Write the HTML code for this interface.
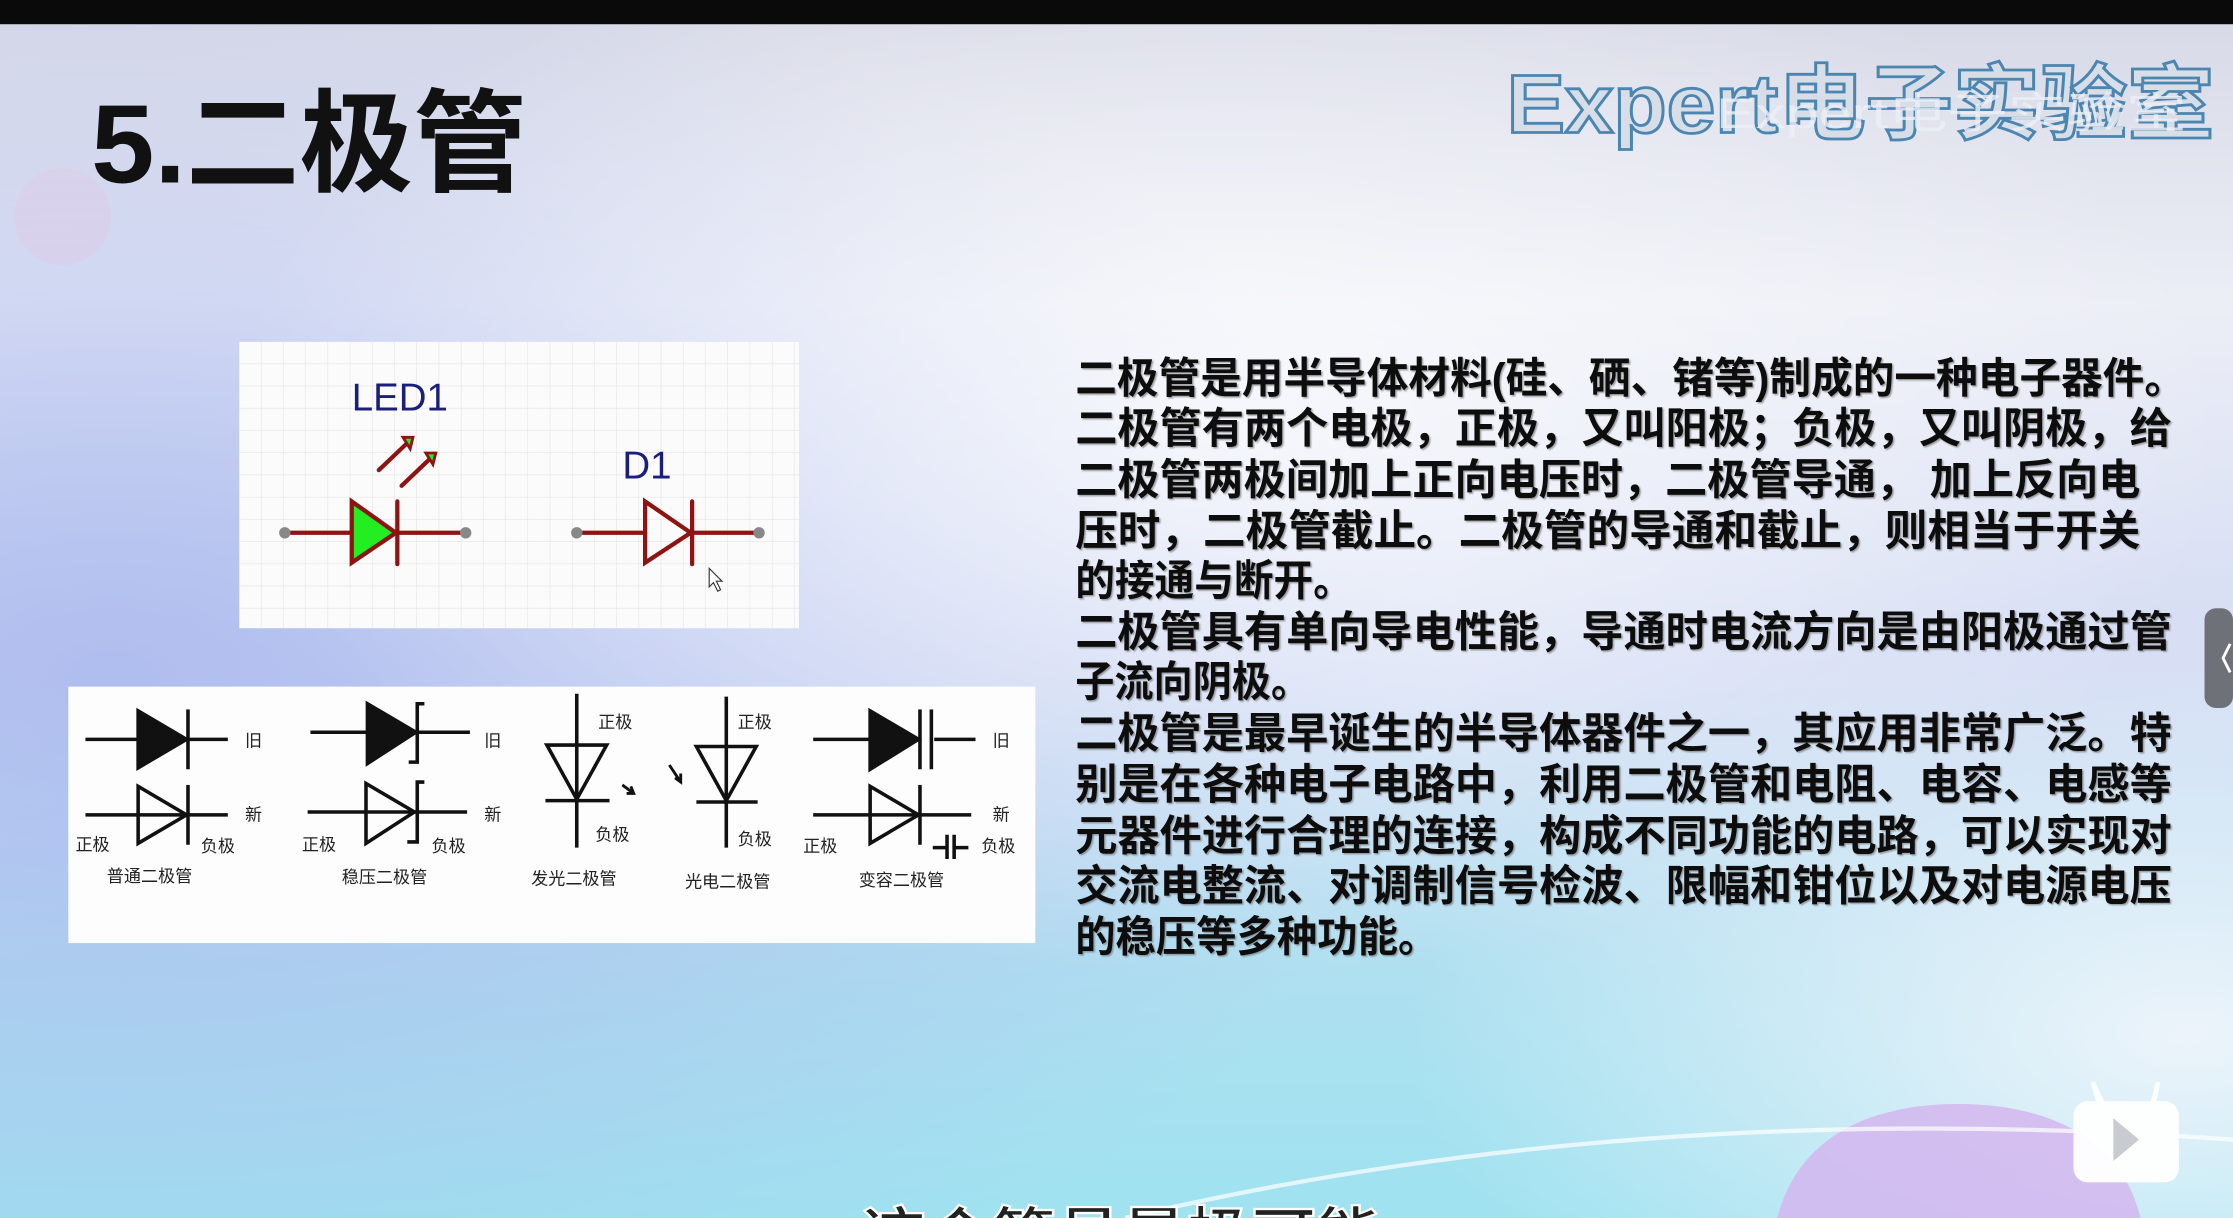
<!DOCTYPE html>
<html><head><meta charset="utf-8"><style>
html,body{margin:0;padding:0;width:2233px;height:1218px;overflow:hidden;background:#000}
svg{display:block}
.cn{font-family:"Liberation Sans","Noto Sans CJK SC","WenQuanYi Zen Hei",sans-serif}
</style></head><body>
<svg width="2233" height="1218" viewBox="0 0 1568 855" preserveAspectRatio="none" xmlns="http://www.w3.org/2000/svg" overflow="hidden">
<defs>
<linearGradient id="bg" x1="0" y1="0" x2="0" y2="1">
<stop offset="0" stop-color="#d6d8e6"/>
<stop offset="0.25" stop-color="#eceef6"/>
<stop offset="0.55" stop-color="#d4dcf4"/>
<stop offset="0.8" stop-color="#aee0f0"/>
<stop offset="1" stop-color="#9fe2f0"/>
</linearGradient>
<radialGradient id="lav" cx="0.05" cy="0.55" r="0.6">
<stop offset="0" stop-color="#a9b8ee" stop-opacity="0.85"/>
<stop offset="1" stop-color="#a9b8ee" stop-opacity="0"/>
</radialGradient>
<radialGradient id="wh" cx="0.55" cy="0.35" r="0.45">
<stop offset="0" stop-color="#ffffff" stop-opacity="0.7"/>
<stop offset="1" stop-color="#ffffff" stop-opacity="0"/>
</radialGradient>
<radialGradient id="rt" cx="0.98" cy="0.85" r="0.35">
<stop offset="0" stop-color="#f4f6fc" stop-opacity="0.9"/>
<stop offset="1" stop-color="#f4f6fc" stop-opacity="0"/>
</radialGradient>
<pattern id="grid" width="15.6" height="15.6" patternUnits="userSpaceOnUse" x="168" y="240">
<path d="M15.6 0V15.6M0 15.6H15.6" stroke="#e3e3e6" stroke-width="0.8" fill="none"/>
</pattern>
<filter id="sh"><feDropShadow dx="1" dy="1" stdDeviation="0.6" flood-color="#666" flood-opacity="0.6"/></filter>
</defs>
<rect width="1568" height="855" fill="url(#bg)"/>
<rect width="1568" height="855" fill="url(#lav)"/>
<rect width="1568" height="855" fill="url(#wh)"/>
<rect width="1568" height="855" fill="url(#rt)"/>
<circle cx="44" cy="152" r="34" fill="#e0c8e6" opacity="0.4"/>
<path d="M1248 855 C1262 800 1310 775 1375 775 C1440 775 1490 800 1503 855 Z" fill="#d4b6ee" opacity="0.85"/>
<path d="M790 855 Q1150 770 1568 800" stroke="#fff" stroke-width="3" fill="none" opacity="0.7"/>
<rect x="0" y="0" width="1568" height="17" fill="#0a0a0a"/>

<text x="64" y="128" class="cn" font-size="78" font-weight="bold" fill="#111" textLength="306" lengthAdjust="spacingAndGlyphs">5.二极管</text>

<text x="1058" y="93" class="cn" font-size="58" font-weight="bold" fill="#d8dee8" stroke="#4a86b0" stroke-width="2" textLength="497" lengthAdjust="spacingAndGlyphs">Expert电子实验室</text>
<text x="1205" y="90" class="cn" font-size="30" fill="#eef0f6" opacity="0.8" textLength="330" lengthAdjust="spacingAndGlyphs">Expert电子实验室</text>

<rect x="168" y="240" width="393" height="201" fill="#fbfbfc"/>
<rect x="168" y="240" width="393" height="201" fill="url(#grid)"/>
<text x="247" y="288" font-family="Liberation Sans,sans-serif" font-size="27" fill="#1b1f7a">LED1</text>
<text x="437" y="336" font-family="Liberation Sans,sans-serif" font-size="27" fill="#1b1f7a">D1</text>
<g stroke="#8e1414" stroke-width="3" fill="none" stroke-linecap="round">
<line x1="200" y1="374" x2="246" y2="374"/><line x1="279" y1="374" x2="327" y2="374"/>
<polygon points="247,352 247,395 278,374" fill="#22ee22"/>
<line x1="279" y1="352" x2="279" y2="396"/>
<line x1="266" y1="330" x2="287" y2="310"/><line x1="282" y1="341" x2="303" y2="321"/>
<line x1="405" y1="374" x2="453" y2="374"/><line x1="486" y1="374" x2="533" y2="374"/>
<polygon points="453,352 453,395 485,374" fill="none"/>
<line x1="486" y1="352" x2="486" y2="396"/>
</g>
<polygon points="283,307 290,307 288,315" fill="#22ee22" stroke="#8e1414" stroke-width="2"/>
<polygon points="299,318 306,318 304,326" fill="#22ee22" stroke="#8e1414" stroke-width="2"/>
<g fill="#888"><circle cx="200" cy="374" r="4"/><circle cx="327" cy="374" r="4"/><circle cx="405" cy="374" r="4"/><circle cx="533" cy="374" r="4"/></g>
<path d="M498 399 L498 412 L501 409 L504 415 L506 414 L503 408 L507 408 Z" fill="#fff" stroke="#333" stroke-width="0.8"/>

<rect x="48" y="482" width="679" height="180" fill="#fdfdfd"/>
<g stroke="#111" stroke-width="2.5" fill="none">
<line x1="60" y1="519" x2="160" y2="519"/><polygon points="97,499 97,539 131,519" fill="#111"/><line x1="132" y1="498" x2="132" y2="540"/>
<line x1="60" y1="572" x2="160" y2="572"/><polygon points="97,552 97,592 131,572"/><line x1="132" y1="551" x2="132" y2="593"/>
<line x1="218" y1="514" x2="330" y2="514"/><polygon points="258,494 258,536 292,514" fill="#111"/><path d="M298 494 H293 V535 H287"/>
<line x1="216" y1="570" x2="328" y2="570"/><polygon points="257,550 257,592 291,570"/><path d="M298 549 H293 V591 H286"/>
<line x1="405" y1="487" x2="405" y2="595"/><polygon points="384,523 426,523 405,561"/><line x1="383" y1="562" x2="428" y2="562"/>
<line x1="510" y1="489" x2="510" y2="595"/><polygon points="489,524 531,524 510,562"/><line x1="489" y1="563" x2="532" y2="563"/>
<line x1="571" y1="519" x2="645" y2="519"/><line x1="656" y1="519" x2="685" y2="519"/><polygon points="611,499 611,540 645,519" fill="#111"/><line x1="646" y1="498" x2="646" y2="540"/><line x1="654" y1="498" x2="654" y2="540"/>
<line x1="571" y1="572" x2="682" y2="572"/><polygon points="611,552 611,592 645,572"/><line x1="646" y1="551" x2="646" y2="593"/>
<path d="M655 595 H665 M665 586 V603 M670 586 V603 M670 595 H680"/>
</g>
<path d="M437 551 l8 6 M443 552 l2 5 l-5 0" stroke="#111" stroke-width="2" fill="none"/>
<path d="M470 537 l8 12 M478 543 l0 6 l-4 -3" stroke="#111" stroke-width="2" fill="none"/>
<g class="cn" font-size="12" fill="#222">
<text x="172" y="524">旧</text><text x="172" y="576">新</text>
<text x="53" y="597">正极</text><text x="141" y="598">负极</text>
<text x="75" y="619">普通二极管</text>
<text x="340" y="524">旧</text><text x="340" y="576">新</text>
<text x="212" y="597">正极</text><text x="303" y="598">负极</text>
<text x="240" y="620">稳压二极管</text>
<text x="420" y="511">正极</text><text x="418" y="590">负极</text>
<text x="373" y="621">发光二极管</text>
<text x="518" y="511">正极</text><text x="518" y="593">负极</text>
<text x="481" y="623">光电二极管</text>
<text x="697" y="524">旧</text><text x="697" y="576">新</text>
<text x="564" y="598">正极</text><text x="689" y="598">负极</text>
<text x="603" y="622">变容二极管</text>
</g>

<g class="cn" font-size="30" font-weight="bold" fill="#111" filter="url(#sh)">
<text x="755" y="276" textLength="780" lengthAdjust="spacingAndGlyphs">二极管是用半导体材料(硅、硒、锗等)制成的一种电子器件。</text>
<text x="755" y="311" textLength="770" lengthAdjust="spacingAndGlyphs">二极管有两个电极，正极，又叫阳极；负极，又叫阴极，给</text>
<text x="755" y="347" textLength="748" lengthAdjust="spacingAndGlyphs">二极管两极间加上正向电压时，二极管导通， 加上反向电</text>
<text x="755" y="383" textLength="748" lengthAdjust="spacingAndGlyphs">压时，二极管截止。二极管的导通和截止，则相当于开关</text>
<text x="755" y="418" textLength="195" lengthAdjust="spacingAndGlyphs">的接通与断开。</text>
<text x="755" y="454" textLength="770" lengthAdjust="spacingAndGlyphs">二极管具有单向导电性能，导通时电流方向是由阳极通过管</text>
<text x="755" y="489" textLength="165" lengthAdjust="spacingAndGlyphs">子流向阴极。</text>
<text x="755" y="525" textLength="770" lengthAdjust="spacingAndGlyphs">二极管是最早诞生的半导体器件之一，其应用非常广泛。特</text>
<text x="755" y="561" textLength="770" lengthAdjust="spacingAndGlyphs">别是在各种电子电路中，利用二极管和电阻、电容、电感等</text>
<text x="755" y="597" textLength="770" lengthAdjust="spacingAndGlyphs">元器件进行合理的连接，构成不同功能的电路，可以实现对</text>
<text x="755" y="632" textLength="770" lengthAdjust="spacingAndGlyphs">交流电整流、对调制信号检波、限幅和钳位以及对电源电压</text>
<text x="755" y="668" textLength="255" lengthAdjust="spacingAndGlyphs">的稳压等多种功能。</text>
</g>

<rect x="1548" y="427" width="20" height="70" rx="8" fill="#6e7278"/>
<path d="M1566 452 L1561 462 L1566 472" stroke="#fff" stroke-width="2" fill="none"/>

<g fill="#fff" opacity="0.95">
<rect x="1456" y="773" width="74" height="57" rx="10"/>
<path d="M1472 774 L1468 760 L1471 759 L1478 774 Z M1510 774 L1514 759 L1517 760 L1514 774 Z"/>
</g>
<path d="M1484 785 L1484 815 L1502 800 Z" fill="#c8cbd0"/>

<svg x="600" y="838" width="380" height="17" viewBox="0 0 380 17" overflow="hidden">
<text x="5" y="42" class="cn" font-size="40" font-weight="bold" fill="#222" stroke="#fff" stroke-width="1.5" textLength="365" lengthAdjust="spacingAndGlyphs">这个符号是极可能</text>
</svg>
</svg>
</body></html>
